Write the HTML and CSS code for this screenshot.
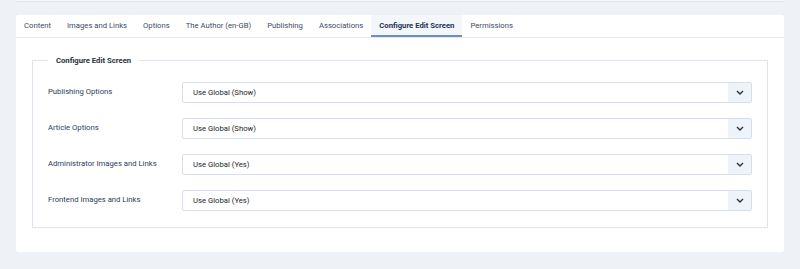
FILE: index.html
```html
<!DOCTYPE html>
<html lang="en">
<head>
  <meta charset="UTF-8" />
  <meta name="viewport" content="width=device-width,initial-scale=1.0"/>
  <title>Article - Configure Edit Screen</title>
  <link rel="stylesheet" href="styles.css">
</head>
<body>

<div class="prev-card"></div>

<div class="card">
  <!-- Tab bar -->
  <ul class="tabs">
    <li>Content</li>
    <li>Images and Links</li>
    <li>Options</li>
    <li>The Author (en-GB)</li>
    <li>Publishing</li>
    <li>Associations</li>
    <li class="active">Configure Edit Screen</li>
    <li>Permissions</li>
  </ul>

  <div class="tab-body">
    <fieldset class="options">
      <legend>Configure Edit Screen</legend>

      <div class="field">
        <label for="showPublishing">Publishing Options</label>
        <div class="select">
          <span>Use Global (Show)</span>
          <span class="caret"><svg width="8" height="5" viewBox="0 0 8 5"><path d="M1 1l3 3 3-3" fill="none" stroke="#2b2f36" stroke-width="1.4"/></svg></span>
        </div>
      </div>

      <div class="field">
        <label for="showOptions">Article Options</label>
        <div class="select">
          <span>Use Global (Show)</span>
          <span class="caret"><svg width="8" height="5" viewBox="0 0 8 5"><path d="M1 1l3 3 3-3" fill="none" stroke="#2b2f36" stroke-width="1.4"/></svg></span>
        </div>
      </div>

      <div class="field">
        <label for="showAdminImages">Administrator Images and Links</label>
        <div class="select">
          <span>Use Global (Yes)</span>
          <span class="caret"><svg width="8" height="5" viewBox="0 0 8 5"><path d="M1 1l3 3 3-3" fill="none" stroke="#2b2f36" stroke-width="1.4"/></svg></span>
        </div>
      </div>

      <div class="field">
        <label for="showFrontImages">Frontend Images and Links</label>
        <div class="select">
          <span>Use Global (Yes)</span>
          <span class="caret"><svg width="8" height="5" viewBox="0 0 8 5"><path d="M1 1l3 3 3-3" fill="none" stroke="#2b2f36" stroke-width="1.4"/></svg></span>
        </div>
      </div>
    </fieldset>
  </div>
</div>

</body>
</html>
```

FILE: styles.css
```css
/* Joomla-ish admin tab panel, scaled down */
* {
  margin: 0;
  padding: 0;
  box-sizing: border-box;
}
body {
  font-family: Roboto, "Noto Sans", sans-serif;
  background: #eef2f6;
  color: #22262a;
  padding: 0 16px;
}
.prev-card {
  height: 2px;
  background: #f5f7fa;
  border-bottom: 1px solid #e2e7ee;
  margin-bottom: 13px;
}
.card {
  background: #fff;
  border-radius: 2px;
  box-shadow: 0 0 1px rgba(0,0,0,0.06);
}
.tabs {
  list-style: none;
  display: flex;
  border-bottom: 1px solid #e4e9f0;
  font-size: 7.7px;
  color: #3c4a63;
}
.tabs li {
  padding: 0 8px;
  height: 22px;
  line-height: 22px;
}
.tabs li.active {
  background: #f3f6fa;
  font-weight: bold;
  color: #233352;
  box-shadow: inset 0 -2px 0 #6d8fc6;
}
.tab-body {
  padding: 18px 16px 24px;
}
fieldset.options {
  border: 1px solid #dde4ee;
  padding: 17px 15px 16px;
  display: flex;
  flex-direction: column;
  gap: 15px;
}
legend {
  padding: 0 8px;
  font-size: 7.7px;
  font-weight: bold;
  color: #2b3038;
}
.field {
  display: flex;
  align-items: flex-start;
}
label {
  width: 134px;
  flex: none;
  font-size: 7.7px;
  color: #2a3b5c;
  padding-top: 5px;
}
.select {
  flex: 1;
  height: 21px;
  border: 1px solid #d6dfeb;
  border-radius: 2px;
  display: flex;
  align-items: center;
  justify-content: space-between;
  font-size: 7.7px;
  color: #22262a;
  padding-left: 10px;
  overflow: hidden;
}
.caret {
  width: 23px;
  height: 100%;
  background: #eef3fa;
  display: flex;
  align-items: center;
  justify-content: center;
}
```
